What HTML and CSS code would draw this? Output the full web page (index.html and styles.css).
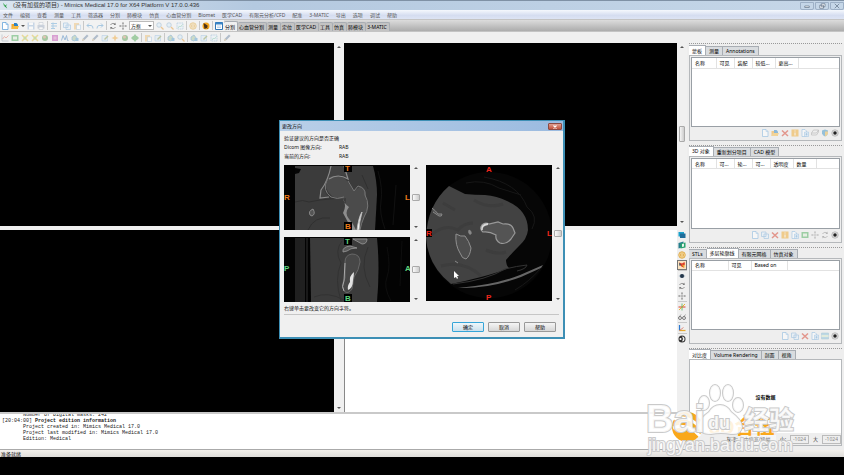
FILE: index.html
```html
<!DOCTYPE html>
<html lang="zh-CN">
  <head>
    <meta charset="UTF-8" />
    <meta name="viewport" content="width=device-width, initial-scale=1.0" />
    <title>Mimics Medical 17.0</title>
    <link rel="stylesheet" href="styles.css" />
  </head>
  <body>
    <svg class="sprite" aria-hidden="true">
      <symbol id="i-doc" viewBox="0 0 16 16"><path d="M3 1h7l4 4v10H3z" fill="#fff" stroke="#5b9fd8" stroke-width="1.5"/><path d="M10 1v4h4" fill="none" stroke="#5b9fd8"/></symbol>
      <symbol id="i-docplus" viewBox="0 0 16 16"><path d="M2 1h6l3 3v11H2z" fill="#fff" stroke="#5b9fd8" stroke-width="1.3"/><path d="M7 6h8v9H7z" fill="#cfe5f7" stroke="#5b9fd8"/><path d="M11 8v5M9 10.500h4" stroke="#3a86c8"/></symbol>
      <symbol id="i-open" viewBox="0 0 16 16"><path d="M1 4h5l2 2h6v8H1z" fill="#f0a52a"/><path d="M6 2h5l3 3v7H6z" fill="#2d83c6"/><path d="M1 14l3-6h12l-3 6z" fill="#f7bb44"/></symbol>
      <symbol id="i-save" viewBox="0 0 16 16"><path d="M1 1h14v14H1z" fill="#9dbbdc"/><path d="M4 1h8v5H4zM4 9h8v6H4z" fill="#fff"/></symbol>
      <symbol id="i-print" viewBox="0 0 16 16"><path d="M4 1h8v5H4z" fill="#fff" stroke="#8797ad"/><path d="M1 6h14v7H1z" fill="#a5b3c7"/><path d="M4 10h8v5H4z" fill="#fff" stroke="#8797ad"/></symbol>
      <symbol id="i-align" viewBox="0 0 16 16"><path d="M2 3h12M2 8h12M2 13h8M6 1v13" stroke="#6aaada" stroke-width="2"/></symbol>
      <symbol id="i-copy" viewBox="0 0 16 16"><path d="M1 2h9v9H1zM6 6h9v9H6z" fill="#e4f0fa" stroke="#6aa5d6" stroke-width="1.4"/></symbol>
      <symbol id="i-paste" viewBox="0 0 16 16"><path d="M2 2h10v13H2z" fill="#efc178"/><path d="M7 6h8v9H7z" fill="#fff" stroke="#6aa5d6"/></symbol>
      <symbol id="i-undo" viewBox="0 0 16 16"><path d="M2 7h8q4 0 4 6M6 3L2 7l4 4" fill="none" stroke="#5f9fd2" stroke-width="2"/></symbol>
      <symbol id="i-redo" viewBox="0 0 16 16"><path d="M14 7H6q-4 0-4 6M10 3l4 4-4 4" fill="none" stroke="#5f9fd2" stroke-width="2"/></symbol>
      <symbol id="i-rotate" viewBox="0 0 16 16"><path d="M3 6a6 6 0 0 1 10-1M13 10a6 6 0 0 1-10 1" fill="none" stroke="#777" stroke-width="1.5"/><path d="M13 1v5H9zM3 15v-5h4z" fill="#777"/></symbol>
      <symbol id="i-move" viewBox="0 0 16 16"><path d="M8 2v12M2 8h12" stroke="#777"/><path d="M8 0l2 3H6zM8 16l2-3H6zM0 8l3-2v4zM16 8l-3-2v4z" fill="#777"/></symbol>
      <symbol id="i-zoom" viewBox="0 0 16 16"><circle cx="6" cy="6" r="4.500" fill="#d8edfb" stroke="#7da4c4" stroke-width="1.5"/><path d="M10 10l5 5" stroke="#e69b36" stroke-width="2.5"/></symbol>
      <symbol id="i-fit" viewBox="0 0 16 16"><path d="M2 2h12v12H2z" fill="#eaf3fa" stroke="#7ba9ce" stroke-dasharray="3 1.500" stroke-width="1.5"/><path d="M4 12l3-4 2 2 4-5" fill="none" stroke="#6b9" stroke-width="1.5"/></symbol>
      <symbol id="i-coin" viewBox="0 0 16 16"><circle cx="8" cy="8" r="6.500" fill="#fae3ae" stroke="#dca43c" stroke-width="1.8"/><path d="M8 3v10M5 5v6M11 5v6" stroke="#d89b34" stroke-width="1.4"/></symbol>
      <symbol id="i-burst" viewBox="0 0 16 16"><circle cx="8" cy="8" r="7" fill="#f5a51c"/><path d="M3 2l5 3 4 3-2 2 2 4-3-2-4 2-1-6z" fill="#4b3117"/></symbol>
      <symbol id="i-window" viewBox="0 0 16 16"><path d="M1 1h14v14H1z" fill="#fff" stroke="#2f75b5" stroke-width="2"/><path d="M1 1h14v4H1z" fill="#3a86c8"/><path d="M4 8h8M4 11h8" stroke="#7aabdb"/></symbol>
      <symbol id="i-chart" viewBox="0 0 16 16"><path d="M2 1v13h13" fill="none" stroke="#89a" stroke-width="1.5"/><path d="M3 10l4-5 3 3 5-5" fill="none" stroke="#df6f60" stroke-width="1.8"/></symbol>
      <symbol id="i-mask" viewBox="0 0 16 16"><path d="M1 2h14v12H1z" fill="#4cae5d"/><path d="M4 5h8v6H4z" fill="#dfedd9"/></symbol>
      <symbol id="i-grow" viewBox="0 0 16 16"><path d="M2 2l12 12M14 2L2 14" stroke="#e5c441" stroke-width="3"/><circle cx="8" cy="8" r="3" fill="#a0ca65"/></symbol>
      <symbol id="i-ball" viewBox="0 0 16 16"><circle cx="8" cy="8" r="6" fill="#5b9f54"/><circle cx="7" cy="6" r="3" fill="#cf9a78"/></symbol>
      <symbol id="i-cube" viewBox="0 0 16 16"><path d="M2 2h12v12H2z" fill="#bf50b5"/><path d="M5 5h6v6H5z" fill="#dc8cc9"/></symbol>
      <symbol id="i-wave" viewBox="0 0 16 16"><path d="M1 13L4 3l4 9 3-9 2 10h2" fill="none" stroke="#4d87c2" stroke-width="2"/></symbol>
      <symbol id="i-poly" viewBox="0 0 16 16"><path d="M2 6l6-4 5 7-5 5-6-2z" fill="#a9c6a0" stroke="#4f91c4" stroke-width="1.5"/><path d="M9 8h6v6H9z" fill="#569ed1"/></symbol>
      <symbol id="i-pen" viewBox="0 0 16 16"><path d="M2 14l2-5 8-8 3 3-8 8z" fill="#7188a5"/><path d="M2 14l2-5 3 3z" fill="#d9b474"/></symbol>
      <symbol id="i-star" viewBox="0 0 16 16"><path d="M8 1l2 5 5 2-5 2-2 5-2-5-5-2 5-2z" fill="#f2a93b"/></symbol>
      <symbol id="i-plus" viewBox="0 0 16 16"><path d="M8 0l3 4h1l4 4-4 4h-1l-3 4-3-4H4L0 8l4-4h1z" fill="#56ab5a"/></symbol>
      <symbol id="i-edit" viewBox="0 0 16 16"><path d="M2 3h11v11H2z" fill="#dbeaf7" stroke="#6aa5d6"/><path d="M6 10l7-7 2 2-7 7z" fill="#8b9d59"/></symbol>
      <symbol id="i-x" viewBox="0 0 16 16"><path d="M2 3l12 11M14 3L2 14" stroke="#d8402c" stroke-width="3"/></symbol>
      <symbol id="i-info" viewBox="0 0 16 16"><path d="M1 1h14v14H1z" fill="#f1aa2b"/><path d="M8 3v2M8 7v6" stroke="#fff" stroke-width="2"/></symbol>
      <symbol id="i-layer" viewBox="0 0 16 16"><path d="M5 2h10l-4 6H1zM1 8v4h10l4-6V2" fill="#eee" stroke="#888" stroke-width="1.3"/></symbol>
      <symbol id="i-shield" viewBox="0 0 16 16"><path d="M2 3l6-2 6 2v6q-1 4-6 6-5-2-6-6z" fill="#3f94c6"/><path d="M8 5h6v4q-1 4-6 6z" fill="#e7b64a"/></symbol>
      <symbol id="i-eye" viewBox="0 0 16 16"><circle cx="8" cy="8" r="6.500" fill="#ddd" stroke="#999"/><circle cx="8" cy="8" r="3.500" fill="#222"/></symbol>
      <symbol id="i-table" viewBox="0 0 16 16"><path d="M1 2h14v12H1z" fill="#8dc3db" stroke="#64a3be"/><path d="M1 6h14v4H1z" fill="#d6e9cc"/></symbol>
      <symbol id="i-screens" viewBox="0 0 16 16"><path d="M1 2h11v9H1z" fill="#19a1cc"/><path d="M4 5h11v9H4z" fill="#1f6d9a"/></symbol>
      <symbol id="i-book" viewBox="0 0 16 16"><path d="M1 4l10-3v11L1 15z" fill="#267f8d"/><path d="M5 5l10-2v10L5 15z" fill="#2aa36f"/><path d="M8 6l4-1v6l-4 1z" fill="#eaf5ee"/></symbol>
      <symbol id="i-bug" viewBox="0 0 16 16"><path d="M2 3l6 2 5-3 1 5-4 2 3 4-5-1-4-4z" fill="#dd3d28"/><path d="M8 7l6 2-3 5z" fill="#e7a62c"/><path d="M2 3l4 5-3 2z" fill="#356"/></symbol>
      <symbol id="i-look" viewBox="0 0 16 16"><path d="M1 8q7-8 14 0-7 8-14 0z" fill="#b8c3cc"/><circle cx="8" cy="8" r="4" fill="#23364a"/></symbol>
      <symbol id="i-axis" viewBox="0 0 16 16"><path d="M1 8h14" stroke="#e0402b" stroke-width="2"/><path d="M2 14L14 2" stroke="#e9b430" stroke-width="2"/><path d="M8 1v14" stroke="#48ab50" stroke-width="1.5"/></symbol>
      <symbol id="i-glasses" viewBox="0 0 16 16"><circle cx="4" cy="10" r="3" fill="none" stroke="#555" stroke-width="1.5"/><circle cx="12" cy="10" r="3" fill="none" stroke="#555" stroke-width="1.5"/><path d="M3 7l3-4M12 7l3-4" stroke="#555"/></symbol>
      <symbol id="i-corner" viewBox="0 0 16 16"><path d="M3 2v11" stroke="#2b78d0" stroke-width="2.5"/><path d="M3 13h12" stroke="#e6a92e" stroke-width="2.5"/><path d="M3 13l8-6" stroke="#d76c5b" stroke-width="1.5"/></symbol>
      <symbol id="i-contrast" viewBox="0 0 16 16"><circle cx="8" cy="8" r="7" fill="#333"/><path d="M8 3a5 5 0 0 1 0 10l2-5z" fill="#eee"/><circle cx="5" cy="8" r="2" fill="#fff"/></symbol>
    </svg>

    <div class="app">
      <header class="titlebar">
        <svg class="logo" viewBox="0 0 16 16" aria-hidden="true"><path d="M3 2l4 6 5-3-3 4 3 6-5-4z" fill="#209a41"/><path d="M2 1l6 8-3 1z" fill="#54b46a"/></svg>
        <h1>(没有加载的项目) - Mimics Medical 17.0 for X64 Platform V 17.0.0.436</h1>
        <div class="window-buttons">
          <button aria-label="最小化"><svg viewBox="0 0 10 8"><path d="M2 4h6v2H2z" class="glyph"/></svg></button>
          <button aria-label="还原"><svg viewBox="0 0 10 8"><path d="M4 1h5v4H4zM2 3h5v4H2z" class="glyph"/></svg></button>
          <button aria-label="关闭"><svg viewBox="0 0 10 8"><path d="M2 1l6 6M8 1L2 7" class="glyph"/></svg></button>
        </div>
      </header>

      <nav class="menubar">
        <button>文件</button><button>编辑</button><button>查看</button><button>测量</button><button>工具</button><button>筛选器</button><button>分割</button><button>肺模块</button><button>仿真</button><button>心血管分割</button><button>Biomet</button><button>医学CAD</button><button>有限元分析/CFD</button><button>配准</button><button>3-MATIC</button><button>导出</button><button>选项</button><button>调试</button><button>帮助</button>
      </nav>

      <div class="toolrow">
        <div class="toolbar">
          <div class="tools" data-icons="doc! open! v save print | align | copy paste | undo redo | rotate! move!"></div>
          <div class="mode"><select aria-label="选择方式"><option>方框</option></select><i class="down"></i></div>
          <div class="tools" data-icons="zoom zoom fit | coin | burst! | window!"></div>
        </div>
        <div class="tabs module-tabs">
          <button class="tab active">分割</button><button class="tab">心血管分割</button><button class="tab">测量</button><button class="tab">定位</button><button class="tab">医学CAD</button><button class="tab">工具</button><button class="tab">仿真</button><button class="tab">肺模块</button><button class="tab">3-MATIC</button>
        </div>
      </div>
      <div class="toolrow second">
        <div class="tools" data-icons="chart mask grow grow ball cube wave poly pen pen edit star ball plus | paste edit | poly zoom | poly edit fit | pen"></div>
      </div>

      <div class="workspace">
        <main class="left">
          <div class="views">
            <section class="view"></section>
            <div class="scroll"><i class="up"></i><i class="down"></i></div>
            <section class="view"></section>
            <div class="scroll"><i class="up"></i><b class="thumb"></b><i class="down"></i></div>
            <section class="view"></section>
            <div class="scroll"><i></i><i class="down"></i></div>
            <section class="view view-3d"></section>
            <div class="tools side" data-icons="screens! book! coin! bug!* | look! rotate! move! | axis! glasses! | corner! | contrast!"></div>
          </div>
          <div class="log">
            <pre>       Number of Digital masks: 242
[20:04:00] <b>Project edition information</b>
       Project created in: Mimics Medical 17.0
       Project last modified in: Mimics Medical 17.0
       Edition: Medical</pre>
          </div>
        </main>

        <aside class="panels">
          <section class="panel">
            <div class="tabs"><button class="tab active">蒙板</button><button class="tab">测量</button><button class="tab">Annotations</button></div>
            <div class="panel-body">
              <div class="list"><table>
                <tr><th class="c-name">名称</th><th class="c-mid">可见</th><th class="c-mid">装配</th><th class="c-wide">较低...</th><th class="c-wide">更高...</th><th></th></tr>
              </table></div>
              <div class="tools" data-icons="doc open x info docplus layer shield eye!"></div>
            </div>
          </section>
          <section class="panel">
            <div class="tabs"><button class="tab active">3D 对象</button><button class="tab">重新划分项目</button><button class="tab">CAD 模型</button></div>
            <div class="panel-body">
              <div class="list"><table>
                <tr><th class="c-name">名称</th><th class="c-mid">可...</th><th class="c-mid">轮...</th><th class="c-mid">可...</th><th class="c-wide">透明度</th><th class="c-wide">数量</th><th></th></tr>
              </table></div>
              <div class="tools" data-icons="doc copy x info docplus mask move rotate eye!"></div>
            </div>
          </section>
          <section class="panel">
            <div class="tabs"><button class="tab">STLs</button><button class="tab active">多层轮廓线</button><button class="tab">有限元网格</button><button class="tab">仿真对象</button></div>
            <div class="panel-body">
              <div class="list"><table>
                <tr><th class="c-title">名称</th><th class="c-wide">可见</th><th class="c-title">Based on</th><th></th></tr>
              </table></div>
              <div class="tools" data-icons="doc copy x docplus table eye!"></div>
            </div>
          </section>
          <section class="panel">
            <div class="tabs"><button class="tab active">对比度</button><button class="tab">Volume Rendering</button><button class="tab">剖面</button><button class="tab">视角</button></div>
            <div class="panel-body contrast">
              <div class="empty">没有数据</div>
              <div class="levels">
                <label for="scale">灰度:</label>
                <select id="scale"><option>中值宽/级幅</option></select>
                <label for="low">小:</label><input id="low" value="-1024" />
                <label for="high">大</label><input id="high" value="-1024" />
              </div>
            </div>
          </section>
        </aside>
      </div>
      <footer class="status"><span>准备就绪</span></footer>
    </div>

    <div class="dialog" role="dialog" aria-labelledby="dialog-title">
      <div class="dialog-title">
        <h2 id="dialog-title">更改方向</h2>
        <button class="close" aria-label="关闭"><svg viewBox="0 0 10 8"><path d="M3 2l4 4M7 2L3 6" stroke="#fff" stroke-width="1.5"/></svg></button>
      </div>
      <div class="dialog-body">
        <p>验证建议的方向是否正确</p>
        <dl>
          <dt>Dicom 图像方向:</dt><dd>RAB</dd>
          <dt>当前的方向:</dt><dd>RAB</dd>
        </dl>
        <div class="scans">
          <div class="scan-column">
            <div class="scan coronal">
              <svg viewBox="0 0 126 65">
                <path d="M0 0h126v65H0z" fill="#030303"/>
                <path d="M11 1h78q4 14 4 29-1 19-2 35H11z" fill="#3b3b3b"/>
                <path d="M11 37q8-3 14 0l11-2 20-2M24 65q6-14 22-12M78 10l6 14" fill="none" stroke="#303030"/>
                <path d="M11 3l6 1-2 4-4 1z" fill="#050505"/>
                <path d="M47 1q-3 14-9 23l-2 9 9-1q-7-6-4-13 4-9 16-9 7 1 7 4L61 1z" fill="#424242"/>
                <path d="M43 13q12-6 20 3l7 10 7-5q6 5 5 12 4 11-3 20l-3 12h-7l-8-17 1-15q-8 2-14-2-9-8-5-18z" fill="#4b4b4b"/>
                <path d="M47 1q-3 15-10 24l-1 8 9-1M60 1l4 13q-10-6-19 0" fill="none" stroke="#8c8c8c" stroke-width="1.2"/>
                <path d="M43 15q-5 10 4 17 6 3 13 0M64 16l6 10 4-5q8 2 7 9 6 11-1 22-3 7-4 13" fill="none" stroke="#777"/>
                <path d="M59 33q4 8 0 15l7 13q0 3 2 4h4q-3-7-7-11-5-6 0-12-5-3-6-9z" fill="#8d8d8d"/>
                <path d="M73 65q2-14 5-18-3 11-3 18z" fill="#fff" stroke="#bbb"/>
                <path d="M29 44q-5 2-3 6l2 1q4-2 1-7z" fill="#555" stroke="#999" stroke-width=".8"/>
                <path d="M94 6q5 18 3 30t4 28M112 20l-3 40" fill="none" stroke="#111"/>
                <path d="M60 0h8v7h-8zM60 57h8v8h-8z" fill="#000"/>
                <text x="61" y="6">T</text><text x="61" y="64">B</text><text x="0" y="35">R</text><text x="121" y="35">L</text>
              </svg>
            </div>
            <div class="slider"><i class="up"></i><input type="range" aria-label="冠状面" /><i class="down"></i></div>
            <div class="scan sagittal">
              <svg viewBox="0 0 126 65">
                <path d="M0 0h126v65H0z" fill="#030303"/>
                <path d="M11 1h10v64H11z" fill="#202020"/><path d="M22 1h2v64h-2z" fill="#191919"/>
                <path d="M26 1h67q3 30 0 64H27z" fill="#3b3b3b"/>
                <path d="M58 4q-8 10-1 22-7 16 0 38M84 10q-9 20 2 40M30 60q14-6 30 3" fill="none" stroke="#323232"/>
                <path d="M59 15q-1-5 7-6l7 2q-7 0-10 3zM69 2h14q0 5-5 5z" fill="#5a5a5a" stroke="#999" stroke-width=".8"/>
                <path d="M61 25q0-7 7-8 8 0 8 8-1 8-6 15l-2 12q-4 6-8 2-3-6 1-13z" fill="#474747" stroke="#6b6b6b" stroke-width=".9"/>
                <path d="M70 35q-5 4-4 10-3 4-2 8 5-2 5-10 1-5 1-8z" fill="#e2e2e2"/>
                <path d="M61 26l-1 18q-3 6 0 10" fill="none" stroke="#aaa"/>
                <path d="M103 10q4 20 0 30t4 24M118 4l-2 45" fill="none" stroke="#0e0e0e"/>
                <path d="M60 1h8v7h-8zM60 57h8v8h-8z" fill="#000"/>
                <text x="61" y="7">T</text><text x="61" y="64">B</text><text x="0" y="34">P</text><text x="121" y="34">A</text>
              </svg>
            </div>
            <div class="slider"><i class="up"></i><input type="range" aria-label="矢状面" /><i class="down"></i></div>
          </div>
          <div class="scan-column">
            <div class="scan axial">
              <svg viewBox="0 0 126 136">
                <path d="M0 0h126v136H0z" fill="#000"/>
                <circle cx="63" cy="70" r="63" fill="#060606"/>
                <path d="M23 21q8 4 16 8 10 1 20 1 12 1 22 6 21 9 21 29-1 9-9 16-7 7-13 14 0 5 3 8-9 4-28 9-15 4-30 7Q2 101 0 73 1 40 23 21z" fill="#424242"/>
                <path d="M5 70q14-12 27-5 6-7 15-7M48 35q14 9 29 4M15 101q22-6 40 10M60 85q12 5 20 2M17 38l12 7" fill="none" stroke="#3d3d3d" stroke-width="3"/>
                <path d="M27 119q34-4 52-15 12-3 22-4-1 4-10 6" fill="none" stroke="#333"/>
                <path d="M32 123q37-3 62-13l23-10-2 3-20 9q-32 12-63 11z" fill="#666"/>
                <path d="M114 104q-10 12-25 21M40 18q18-4 33 5l22 7M58 12q34 6 43 30 12 9 5 22" fill="none" stroke="#171717"/>
                <path d="M6 43q4 3 6 6l4 0q0 3-3 2l-6-4" fill="#555" stroke="#888"/>
                <path d="M56 60q3-3 7-1l9-2 5 2q8-1 10 4l2 5-4 6q-5 6-11 4-5-3-4-8-7-4-13-3-4-3-1-7z" fill="#545454" stroke="#999" stroke-width="1.2"/>
                <path d="M56 65q-1-5 6-6" fill="none" stroke="#d8d8d8" stroke-width="1.8"/>
                <path d="M30 69q5 3 9 2 4 5 6 12-1 8-5 11-4 0-6-6-5-8-4-19z" fill="#4e4e4e" stroke="#909090" stroke-width="1"/>
                <path d="M43 65q3 1 2 4-3 1-2-4zM29 96l3 2" fill="#888" stroke="#888"/>
                <path d="M0 64h6v8H0z" fill="#000"/>
                <text x="60" y="7">A</text><text x="60" y="135">P</text><text x="0" y="71">R</text><text x="121" y="71">L</text>
                <path d="M28 106v7l2-1 1 2 1-1-1-2h2z" fill="#fff"/>
              </svg>
            </div>
            <div class="slider tall"><i class="up"></i><input type="range" aria-label="横断面" /><i class="down"></i></div>
          </div>
        </div>
        <p class="hint">右键单击要改变它的方向字符。</p>
        <div class="actions">
          <button class="default">确定</button><button>取消</button><button>帮助</button>
        </div>
      </div>
    </div>

    <svg class="watermark" viewBox="0 0 160 80" aria-hidden="true">
      <circle cx="44" cy="45" r="15" fill="#f9a81b"/>
      <path d="M30 46q14-6 27 8M31 37q16-5 27 10" fill="none" stroke="#fff" stroke-width="3"/>
      <text class="brand" x="66" y="52">3D合伍</text>
      <g class="outline">
        <ellipse cx="72" cy="11" rx="5" ry="8"/><ellipse cx="85" cy="11" rx="5" ry="8"/>
        <ellipse cx="61" cy="21" rx="5" ry="7"/><ellipse cx="95" cy="23" rx="5" ry="7"/>
        <path d="M77 23q7 0 11 7 11 8 11 15-1 8-11 7-10-2-20 0-12 0-12-8 1-8 10-14 4-7 11-7z"/>
        <text class="big" x="3" y="50">Bai</text>
        <text class="du" x="65" y="47">du</text>
        <text class="cn" x="101" y="47">经验</text>
        <text class="url" x="5" y="69">jingyan.baidu.com</text>
      </g>
    </svg>
    <script src="app.js"></script>
  </body>
</html>
```
FILE: styles.css
```css
* {
  box-sizing: border-box;
}
body {
  margin: 0;
  height: 100vh;
  overflow: hidden;
  position: relative;
  background: #000;
  color: #222;
  font: 5px/8px "Noto Sans", "Noto Sans CJK SC", sans-serif;
}
button,
input,
select {
  margin: 0;
  padding: 0;
  border: none;
  color: inherit;
  font: inherit;
  background: none;
}
select {
  appearance: none;
}
h1,
h2,
p,
dl,
dd,
pre {
  margin: 0;
  font-weight: normal;
}
.sprite {
  display: none;
}
.app {
  height: calc(100% - 18px);
  display: flex;
  flex-direction: column;
  background: #f0f0f0;
}

/* title and menu */
.titlebar {
  height: 10px;
  display: flex;
  align-items: center;
  gap: 4px;
  padding-left: 2px;
  border-top: 1px solid #7f91a5;
  background: linear-gradient(90deg, #dae5f0, #b4c9e0 30%, #c6d7e8);
}
.titlebar h1 {
  flex: 1;
  color: #333;
  font: 6px/9px "Liberation Sans", "Noto Sans CJK SC", sans-serif;
}
.logo {
  width: 7px;
  height: 7px;
}
.window-buttons {
  display: flex;
  gap: 1px;
}
.window-buttons button {
  width: 14px;
  height: 8px;
  line-height: 0;
  border: 1px solid #9db0c6;
  border-radius: 0 0 2px 2px;
}
.window-buttons svg,
.close svg {
  width: 8px;
  height: 6px;
}
.glyph {
  fill: #fff;
  stroke: #67788c;
}
.menubar {
  height: 9px;
  display: flex;
  gap: 7px;
  padding-left: 3px;
  color: #555;
  background: linear-gradient(#f5f8fd, #d5ddf0 60%, #dde4f4);
}

/* toolbars */
.toolrow {
  height: 12px;
  display: flex;
  border-top: 1px solid #c4c4c4;
  background: linear-gradient(#dcdcdc, #acacac);
}
.toolrow.second {
  background: #f0f0f0;
}
.toolbar {
  display: flex;
  align-items: center;
  background: #f2f2f2;
}
.tools {
  display: flex;
  align-items: center;
  gap: 2px;
  padding: 0 1px;
}
.tool {
  width: 8px;
  height: 8px;
  line-height: 0;
  opacity: 0.5;
}
.tool.on {
  opacity: 1;
}
.tool.pressed {
  outline: 1px solid #777;
  background: #fbe3c0;
}
.tool svg {
  width: 100%;
  height: 100%;
}
.sep {
  width: 1px;
  height: 9px;
  background: #c8c8c8;
}
.mode {
  display: flex;
  align-items: center;
  width: 25px;
  height: 9px;
  margin: 0 1px;
  padding: 0 1px;
  border: 1px solid #bbb;
  background: #fff;
}
.mode select {
  flex: 1;
  min-width: 0;
}
.tabs {
  display: flex;
  align-items: flex-end;
}
.tab {
  height: 9px;
  padding: 0 3px;
  color: #000;
  border: 1px solid #a8adb3;
  border-width: 1px 1px 0 0;
  background: #d9dcdf;
}
.tab.active {
  height: 10px;
  background: #fff;
}
.module-tabs .tab {
  padding: 0 2px 0 1px;
  background: #c3c3c3;
  border-radius: 2px 2px 0 0;
}
.module-tabs .tab.active {
  background: #f0f0f0;
}

/* views */
.workspace {
  flex: 1;
  min-height: 0;
  display: flex;
}
.left {
  flex: 1;
  min-width: 0;
  display: flex;
  flex-direction: column;
}
.views {
  flex: 1;
  display: grid;
  grid-template-columns: 1fr 10px 1fr 10px;
  grid-template-rows: 1fr 1fr;
  row-gap: 4px;
  border-bottom: 2px solid #c9c9c9;
}
.view {
  background: #000;
}
.view-3d {
  background: #fff;
  border-left: 1px solid #888;
}
.scroll,
.slider {
  display: flex;
  flex-direction: column;
  align-items: center;
  justify-content: space-between;
  background: #f0f0f0;
}
.scroll {
  padding: 3px 0;
}
.up,
.down {
  border: 2px solid transparent;
}
.up {
  border-top-width: 0;
  border-bottom-color: #555;
}
.down {
  border-bottom-width: 0;
  border-top-color: #555;
}
.thumb {
  width: 6px;
  height: 16px;
  border: 1px solid #aaa;
  border-radius: 1px;
  background: linear-gradient(90deg, #f5f5f5, #ccc);
}
.side {
  flex-direction: column;
  padding: 1px 0;
  background: #efefef;
}
.side .sep {
  width: 9px;
  height: 1px;
  margin: -1px 0;
}
.log {
  height: 36px;
  display: flex;
  align-items: flex-end;
  overflow: hidden;
  padding: 0 2px 7px;
  color: #222;
  background: #fff;
  border-bottom: 1px solid #aaa;
}
.log pre {
  font: 5px/6px "Liberation Mono", monospace;
}

/* docked panels */
.panels {
  width: 157px;
  display: grid;
  grid-template-rows: repeat(4, 1fr);
  padding: 0 2px;
  background: #eee;
}
.panel {
  display: flex;
  flex-direction: column;
  padding-bottom: 4px;
  border-top: 1px dotted #999;
}
.panel:first-child {
  padding-top: 1px;
}
.panel-body {
  flex: 1;
  display: flex;
  flex-direction: column;
  padding: 1px;
  border: 1px solid #b5b8bb;
}
.list {
  flex: 1;
  border: 1px solid #999fa5;
  background: #fff;
}
table {
  width: 100%;
  table-layout: fixed;
  border-collapse: collapse;
}
th {
  height: 10px;
  padding: 0 0 0 3px;
  color: #000;
  text-align: left;
  font-weight: normal;
  white-space: nowrap;
  border-right: 1px solid #e2e2e2;
  border-bottom: 1px solid #e2e2e2;
}
th:last-child {
  border-right: none;
}
.c-name {
  width: 24px;
}
.c-mid {
  width: 18px;
}
.c-wide {
  width: 23px;
}
.c-title {
  width: 36px;
}
.panel-body .tools {
  height: 12px;
  justify-content: flex-end;
}
.panel-body.contrast {
  padding: 0;
}
.empty {
  flex: 1;
  display: grid;
  place-items: center;
  font-weight: bold;
  color: #000;
  background: #fff;
}
.levels {
  height: 12px;
  display: flex;
  align-items: center;
  justify-content: flex-end;
  gap: 4px;
}
.levels select {
  width: 34px;
  height: 9px;
  padding-left: 2px;
  color: #777;
  background: #f6f6f6;
}
.levels input {
  width: 19px;
  height: 9px;
  padding: 0 2px;
  color: #888;
  border: 1px solid #bbb;
}
.status {
  height: 7px;
  overflow: hidden;
  padding-left: 1px;
  color: #111;
  background: linear-gradient(#f3f0ec, #dfddda);
}

/* orientation dialog */
.dialog {
  position: absolute;
  top: 120px;
  left: 50%;
  width: 286px;
  transform: translateX(-50%);
  border: 1px solid #3d8fb5;
  border-right-width: 2px;
  border-bottom-width: 2px;
  background: #f0f0f0;
}
.dialog-title {
  height: 10px;
  display: flex;
  align-items: center;
  justify-content: space-between;
  padding: 0 1px 0 2px;
  background: linear-gradient(90deg, #b9cfe8, #9bbbe0);
}
.dialog-title h2 {
  font-size: 5px;
  color: #111;
}
.close {
  width: 14px;
  height: 7px;
  line-height: 0;
  border: 1px solid #8d4a42;
  border-radius: 1px;
  background: linear-gradient(#dfa091, #c2513a);
}
.dialog-body {
  padding: 3px 4px 5px;
  color: #111;
}
.dialog-body dl {
  display: grid;
  grid-template-columns: 55px 1fr;
}
.dialog-body dl,
.dialog-body p {
  line-height: 9px;
}
.scans {
  display: flex;
  gap: 5px;
  margin-top: 4px;
}
.scan-column {
  display: grid;
  grid-template-columns: 126px 11px;
  row-gap: 7px;
}
.scan svg {
  display: block;
  width: 100%;
}
.scan text {
  font: bold 8px "Liberation Sans", sans-serif;
}
.coronal text {
  fill: #f07d1c;
}
.sagittal text {
  fill: #5fd580;
}
.axial text {
  fill: #f0261c;
}
.slider {
  padding: 2px 0;
}
.slider input {
  width: 8px;
  height: 50px;
  appearance: none;
  writing-mode: vertical-lr;
}
.slider.tall input {
  height: 120px;
}
.slider input::-webkit-slider-thumb {
  width: 8px;
  height: 7px;
  appearance: none;
  border: 1px solid #aaa;
  border-radius: 1px;
  background: linear-gradient(90deg, #fafafa, #ccc);
}
.hint {
  padding: 2px 0 1px;
  border-bottom: 1px solid #c6c6c6;
}
.actions {
  display: flex;
  justify-content: flex-end;
  gap: 4px;
  padding: 7px 3px 0 0;
}
.actions button {
  width: 32px;
  height: 10px;
  color: #000;
  border: 1px solid #999;
  border-radius: 1px;
  background: linear-gradient(#f5f5f5, #d6d6d6);
}
.actions .default {
  border-color: #35a5d8;
  background: linear-gradient(#eef7fb, #cbe0ec);
}

/* site mark over the lower right corner */
.watermark {
  position: absolute;
  right: 41px;
  bottom: 13px;
  width: 160px;
  height: 80px;
  font-family: "Liberation Sans", "Noto Sans CJK SC", sans-serif;
}
.brand {
  font-size: 20px;
  font-weight: bold;
  fill: #f9a81b;
}
.outline {
  fill: rgba(255, 255, 255, 0.85);
  stroke: #cacaca;
  stroke-width: 2px;
  paint-order: stroke;
}
.big {
  font-size: 38px;
  font-weight: bold;
}
.du {
  font-size: 18px;
  font-weight: bold;
}
.cn {
  font-size: 25px;
  font-weight: bold;
}
.url {
  font-size: 18px;
}
```
FILE: app.js
```js
// "!" marks an enabled tool, "*" a pressed one, "|" a separator, "v" a drop-down arrow
document.querySelectorAll(".tools").forEach((bar) => {
  bar.innerHTML = bar.dataset.icons
    .split(" ")
    .map((item) => {
      if (item === "|") return '<span class="sep"></span>';
      if (item === "v") return '<i class="down"></i>';
      const name = item.replace(/[!*]/g, "");
      const on = item.includes("!") ? " on" : "";
      const pressed = item.includes("*") ? " pressed" : "";
      return `<button class="tool${on}${pressed}" aria-label="${name}"><svg><use href="#i-${name}"/></svg></button>`;
    })
    .join("");
});
```
